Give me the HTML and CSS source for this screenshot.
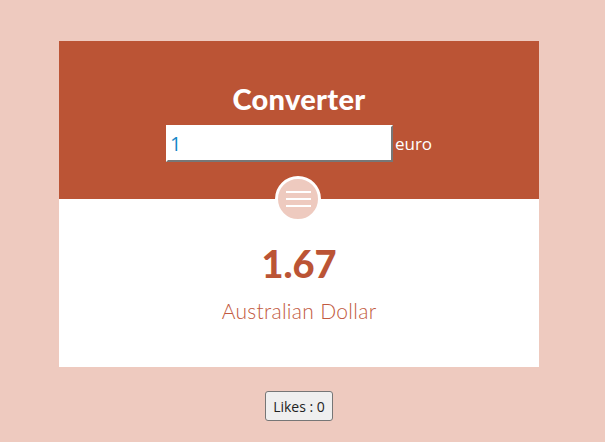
FILE: index.html
```html
<!DOCTYPE html>
<html>
<head>
<meta charset="utf-8">
<link rel="stylesheet" href="styles.css">
</head>
<body>
<div class="page">
  <div class="card">
    <div class="head">
      <h1 class="title">Converter</h1>
      <div class="row">
        <input class="amount" type="text" value="1"><span class="unit">euro</span>
      </div>
      <button class="menu" aria-label="menu">
        <span class="bar"></span><span class="bar"></span><span class="bar"></span>
      </button>
    </div>
    <div class="body">
      <div class="value">1.67</div>
      <div class="currency">Australian Dollar</div>
    </div>
  </div>
  <button class="likes">Likes : 0</button>
</div>
</body>
</html>
```
FILE: styles.css
```css
html, body {
  margin: 0;
  padding: 0;
  background: #eecabf;
  height: 100%;
}
.page {
  width: 598px;
  display: flex;
  flex-direction: column;
  align-items: center;
  padding-top: 41px;
  font-family: "Lato", "Open Sans", sans-serif;
}
.card {
  width: 480px;
  display: flex;
  flex-direction: column;
}
.head {
  position: relative;
  background: #bb5435;
  height: 158px;
  display: flex;
  flex-direction: column;
  align-items: center;
}
.title {
  margin: 40px 0 0 0;
  color: #fff;
  font-weight: 900;
  font-size: 29px;
  line-height: 36px;
  height: 44px;
  letter-spacing: 0.3px;
}
.row {
  display: flex;
  align-items: center;
}
.amount {
  box-sizing: border-box;
  width: 227px;
  height: 37px;
  margin: 0;
  border: 2px solid;
  border-color: #fff #777 #777 #fff;
  background: #fff;
  color: #1588c8;
  font-family: "Open Sans", sans-serif;
  font-size: 20px;
  padding: 0 2px;
  outline: none;
}
.unit {
  color: #fff;
  font-family: "Open Sans", sans-serif;
  font-size: 17px;
  margin-left: 2px;
}
.menu {
  position: absolute;
  left: 216px;
  bottom: -23px;
  width: 46px;
  height: 46px;
  box-sizing: border-box;
  border-radius: 50%;
  border: 3px solid #fff;
  background: #eecabf;
  padding: 0;
  display: flex;
  flex-direction: column;
  align-items: center;
  justify-content: center;
  gap: 5px;
}
.bar {
  display: block;
  width: 25px;
  height: 2px;
  background: #fff;
}
.body {
  background: #fff;
  height: 168px;
  display: flex;
  flex-direction: column;
  align-items: center;
}
.value {
  margin-top: 42px;
  color: #bb5435;
  font-weight: 900;
  font-size: 38px;
  line-height: 44px;
}
.currency {
  margin-top: 13px;
  color: #c25a40;
  font-weight: 300;
  font-size: 21px;
  line-height: 26px;
  letter-spacing: 0.3px;
}
.likes {
  margin-top: 24px;
  height: 30px;
  padding: 0 7px;
  font-family: "Open Sans", sans-serif;
  font-size: 14px;
  color: #222;
  background: #efefef;
  border: 1px solid #767676;
  border-radius: 3px;
}
```
